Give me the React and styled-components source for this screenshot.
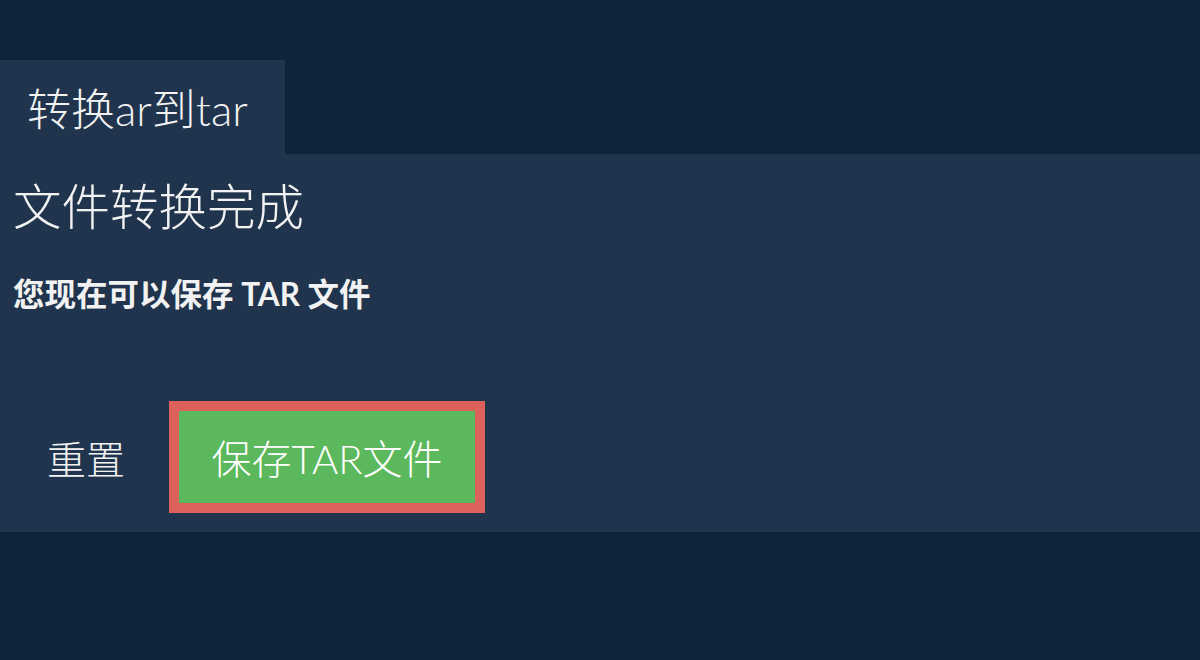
import styled, { createGlobalStyle } from 'styled-components';

const GlobalStyle = createGlobalStyle`
    html, body {
        margin: 0;
        padding: 0;
        background: #0f2339;
    }
    body {
        font-family: Lato, "Noto Sans CJK SC", sans-serif;
        color: #f2f2f2;
    }
`;

function App() {
    return (
        <>
            <GlobalStyle />
            <Page>
                <Tabs>
                    <Tab>转换ar到tar</Tab>
                </Tabs>
                <Panel>
                    <Heading>文件转换完成</Heading>
                    <Message>您现在可以保存 TAR 文件</Message>
                    <Actions>
                        <ResetButton>重置</ResetButton>
                        <SaveButton>保存TAR文件</SaveButton>
                    </Actions>
                </Panel>
            </Page>
        </>
    );
}

export default App;

const Page = styled.main`
    width: 1200px;
    height: 660px;
    padding-top: 60px;
    box-sizing: border-box;
`;

const Tabs = styled.nav`
    display: flex;
`;

const Tab = styled.div`
    height: 94px;
    padding: 0 37px 0 27px;
    display: flex;
    align-items: center;
    background: #20354d;
    font-size: 44px;
    font-weight: 300;
    box-sizing: border-box;
`;

const Panel = styled.section`
    height: 378px;
    background: #20354d;
    padding: 0 13px;
    box-sizing: border-box;
    display: flex;
    flex-direction: column;
`;

const Heading = styled.h2`
    margin: 22px 0 0;
    font-size: 48.5px;
    font-weight: 300;
    line-height: 60px;
`;

const Message = styled.p`
    margin: 38px 0 0;
    font-size: 31.5px;
    font-weight: 700;
    line-height: 40px;
`;

const Actions = styled.div`
    display: flex;
    align-items: center;
    margin-top: 87px;
    gap: 10px;
`;

const ResetButton = styled.button`
    background: none;
    border: none;
    color: #f2f2f2;
    font-family: inherit;
    font-size: 39px;
    font-weight: 300;
    padding: 0 34px;
    height: 112px;
    cursor: pointer;
`;

const SaveButton = styled.button`
    background: #5cb85c;
    border: 10px solid #dc605c;
    color: #ffffff;
    font-family: inherit;
    font-size: 40px;
    font-weight: 300;
    width: 316px;
    height: 112px;
    box-sizing: border-box;
    cursor: pointer;
`;
